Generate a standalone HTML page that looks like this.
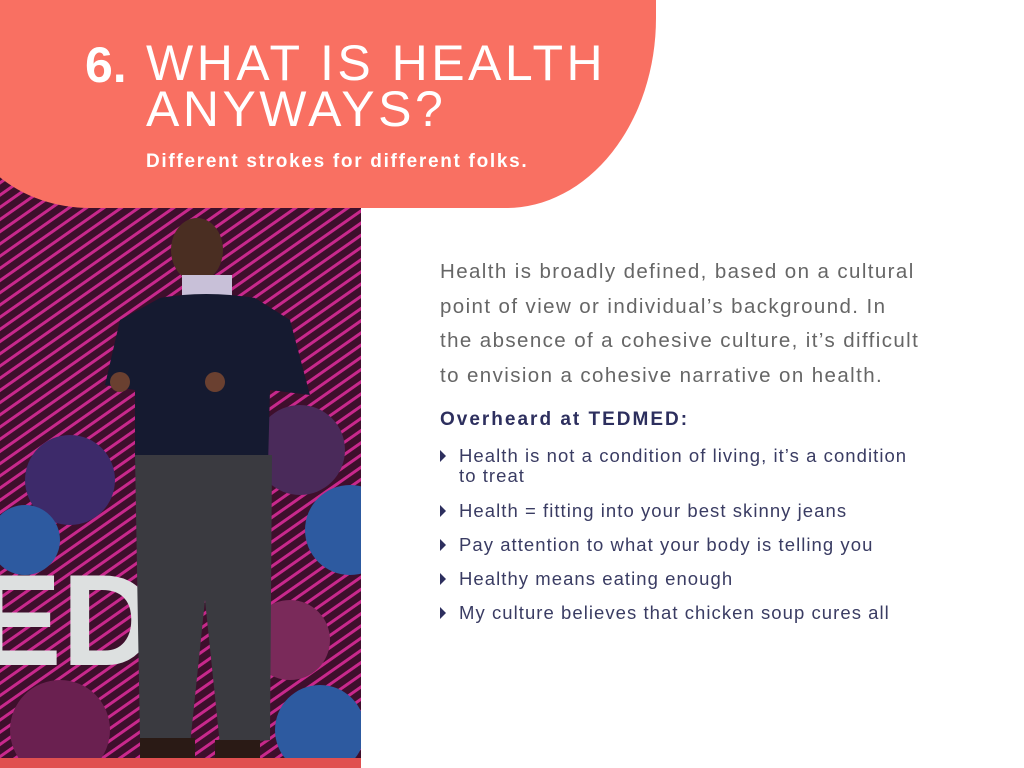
<!DOCTYPE html>
<html><head><meta charset="utf-8"><style>
body{margin:0;width:1024px;height:768px;overflow:hidden;background:#fff;position:relative;font-family:"Liberation Sans",sans-serif}
.photo{position:absolute;left:0;top:120px;width:361px;height:648px}
.blob{position:absolute;left:-40px;top:-80px;width:696px;height:288px;background:#f97062;border-radius:0 0 150px 130px / 0 0 190px 110px}
.t{position:absolute;color:#fff}
.p{position:absolute;left:440px;top:255px;width:560px;font-size:20.5px;line-height:34.5px;color:#666;letter-spacing:1.4px;white-space:nowrap}
.h{position:absolute;left:440px;top:409px;font-size:19px;font-weight:bold;color:#2d2f5e;letter-spacing:2px}
.b{position:absolute;left:459px;font-size:18.5px;line-height:20px;color:#3a3c63;width:520px;letter-spacing:1.05px;white-space:nowrap}
.b:before{content:"";position:absolute;left:-19px;top:4px;border-left:6px solid #2d2f5e;border-top:6px solid transparent;border-bottom:6px solid transparent}
</style></head><body>
<svg class="photo" viewBox="0 0 361 648">
<defs><pattern id="st" width="10" height="10" patternUnits="userSpaceOnUse" patternTransform="rotate(-35)"><rect width="10" height="10" fill="#3e0f2c"/><rect width="10" height="3" fill="#c8288c"/></pattern></defs>
<rect width="361" height="648" fill="url(#st)"/>
<circle cx="70" cy="360" r="45" fill="#3d2a6a"/><circle cx="25" cy="420" r="35" fill="#2d5aa0"/>
<circle cx="350" cy="410" r="45" fill="#2d5aa0"/><circle cx="300" cy="330" r="45" fill="#4a2a5a"/>
<circle cx="320" cy="610" r="45" fill="#2d5aa0"/><circle cx="60" cy="610" r="50" fill="#6a2050"/>
<circle cx="290" cy="520" r="40" fill="#7a2a5a"/>
<text x="-25" y="545" font-family="Liberation Sans" font-weight="bold" font-size="130" fill="#dde0e0">ED</text>
<rect x="0" y="638" width="361" height="10" fill="#e05050"/>
<ellipse cx="197" cy="130" rx="26" ry="32" fill="#4a2e22"/>
<rect x="182" y="155" width="50" height="30" fill="#c8c0d8"/>
<path d="M160 178 Q205 170 255 178 L290 200 L310 275 L270 270 L268 345 L135 345 L135 270 L105 265 L120 200 Z" fill="#151a30"/>
<path d="M135 335 L272 335 L270 620 L220 625 L205 480 L190 625 L140 620 Z" fill="#3a3a40"/>
<rect x="140" y="618" width="55" height="20" fill="#2a1a15"/><rect x="215" y="620" width="45" height="18" fill="#2a1a15"/>
<circle cx="120" cy="262" r="10" fill="#6a4030"/><circle cx="215" cy="262" r="10" fill="#6a4030"/>
</svg>
<div class="blob"></div>
<div class="t" style="left:85px;top:40px;font-size:50px;line-height:50px;font-weight:bold">6.</div>
<div class="t" style="left:146px;top:40px;font-size:50px;line-height:46px;letter-spacing:3.5px">WHAT IS HEALTH<br>ANYWAYS?</div>
<div class="t" style="left:146px;top:151px;font-size:19px;font-weight:bold;letter-spacing:1.7px">Different strokes for different folks.</div>
<div class="p">Health is broadly defined, based on a cultural<br>point of view or individual’s background. In<br>the absence of a cohesive culture, it’s difficult<br>to envision a cohesive narrative on health.</div>
<div class="h">Overheard at TEDMED:</div>
<div class="b" style="top:446px">Health is not a condition of living, it’s a condition<br>to treat</div>
<div class="b" style="top:501px">Health = fitting into your best skinny jeans</div>
<div class="b" style="top:535px">Pay attention to what your body is telling you</div>
<div class="b" style="top:569px">Healthy means eating enough</div>
<div class="b" style="top:603px">My culture believes that chicken soup cures all</div>
</body></html>
